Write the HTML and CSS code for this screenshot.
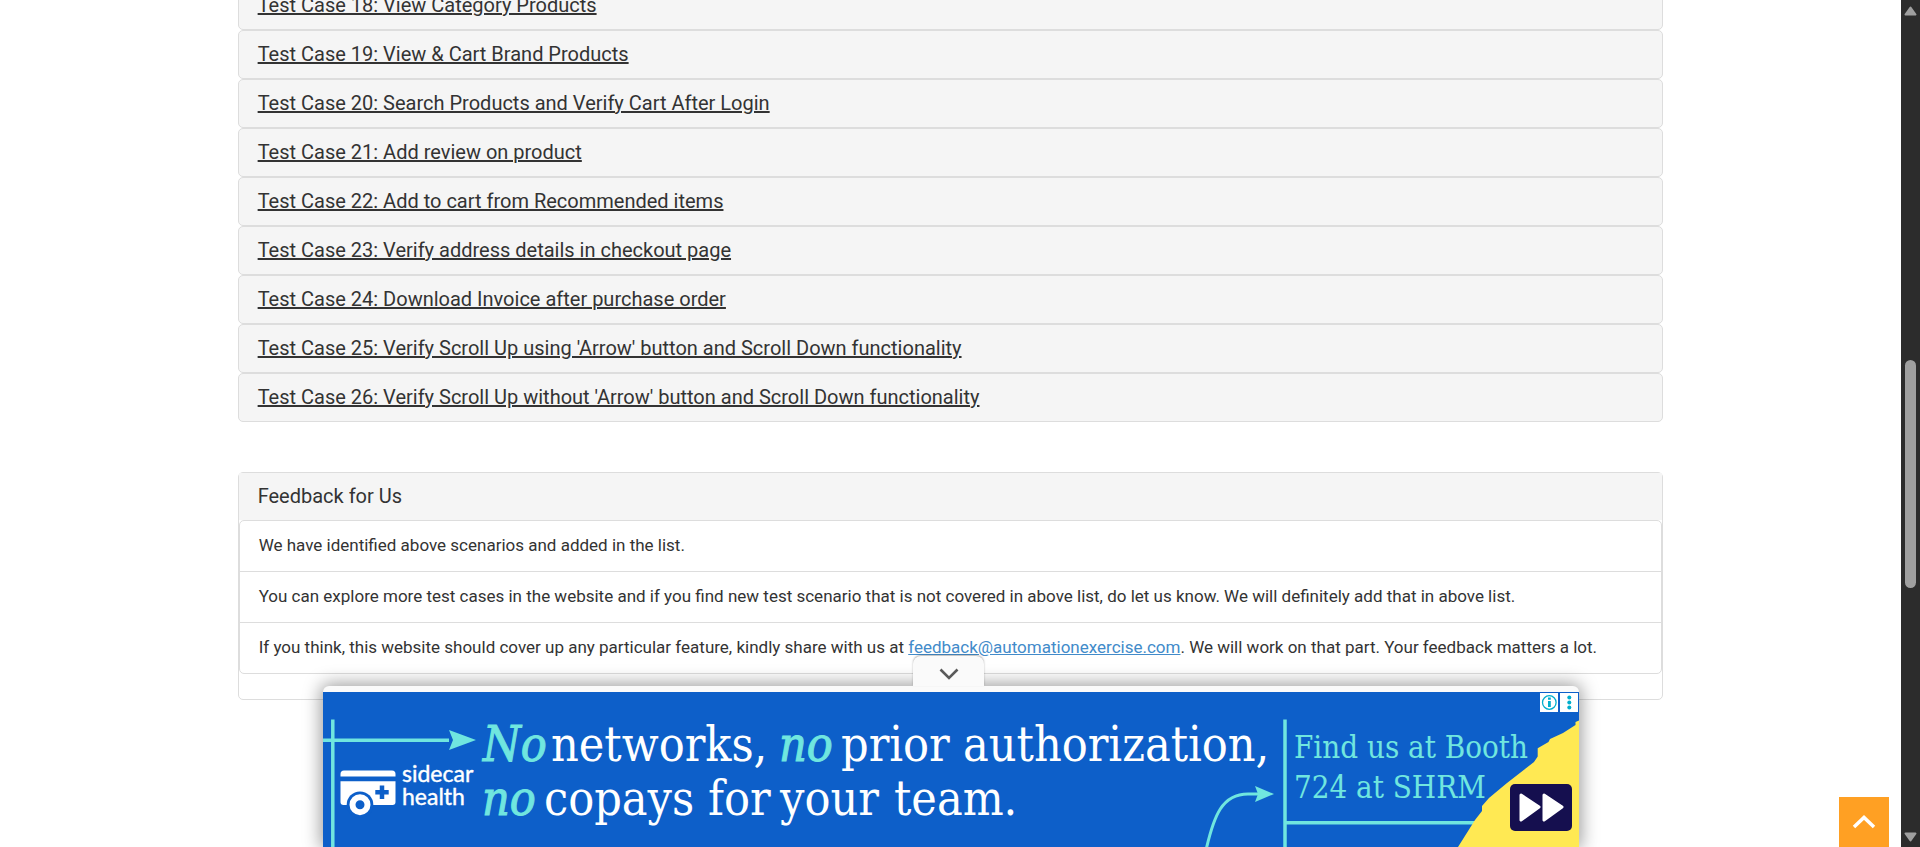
FILE: index.html
```html
<!DOCTYPE html>
<html lang="en">
<head>
<meta charset="utf-8">
<title>Test Cases</title>
<link rel="stylesheet" href="styles.css">
</head>
<body>
<div class="window">
  <main class="page">
    <section class="cases">
      <h4 class="case"><a href="#case18">Test Case 18: View Category Products</a></h4>
      <h4 class="case"><a href="#case19">Test Case 19: View &amp; Cart Brand Products</a></h4>
      <h4 class="case"><a href="#case20">Test Case 20: Search Products and Verify Cart After Login</a></h4>
      <h4 class="case"><a href="#case21">Test Case 21: Add review on product</a></h4>
      <h4 class="case"><a href="#case22">Test Case 22: Add to cart from Recommended items</a></h4>
      <h4 class="case"><a href="#case23">Test Case 23: Verify address details in checkout page</a></h4>
      <h4 class="case"><a href="#case24">Test Case 24: Download Invoice after purchase order</a></h4>
      <h4 class="case"><a href="#case25">Test Case 25: Verify Scroll Up using 'Arrow' button and Scroll Down functionality</a></h4>
      <h4 class="case"><a href="#case26">Test Case 26: Verify Scroll Up without 'Arrow' button and Scroll Down functionality</a></h4>
    </section>
    <section class="feedback">
      <h4 class="feedback-title">Feedback for Us</h4>
      <ul class="feedback-list">
        <li>We have identified above scenarios and added in the list.</li>
        <li>You can explore more test cases in the website and if you find new test scenario that is not covered in above list, do let us know. We will definitely add that in above list.</li>
        <li>If you think, this website should cover up any particular feature, kindly share with us at <a href="mailto:feedback@automationexercise.com">feedback@automationexercise.com</a>. We will work on that part. Your feedback matters a lot.</li>
      </ul>
    </section>

    <button class="scroll-up" type="button" aria-label="Scroll up">
      <svg width="24" height="14" viewBox="0 0 24 14"><path d="M2 12 12 2.500 22 12" fill="none" stroke="#fff" stroke-width="3.500"/></svg>
    </button>

    <aside class="ad">
      <button class="ad-toggle" type="button" aria-label="Collapse ad">
        <svg width="20" height="12" viewBox="0 0 20 12"><path d="M1.500 1.500 10 10 18.500 1.500" fill="none" stroke="#5a5a5a" stroke-width="2.600"/></svg>
      </button>
      <a class="ad-link" href="#ad">
        <svg class="ad-art" viewBox="0 0 1256 155">
          <rect width="1256" height="155" fill="#0d5fc9"/>
          <g stroke="#70e6df" fill="none" stroke-width="3.500">
            <path d="M9.800 27.500V155M0 48.300H126M962 27.500V155M962 130.700H1153"/>
            <path d="M883.500 156C891 124 899 102 925 102H935" stroke-width="3"/>
          </g>
          <path d="M126 38 153 48 126 58 130 48ZM932 94 951 102 932 110 935 102Z" fill="#70e6df"/>
          <path d="M1256 28.500 1252.500 30V33L1240 41 1227 47 1225.500 50 1214.700 56.300V64.500L1211 70 1183.700 91.300 1166 106 1159 114V119L1152 128 1135 155H1256Z" fill="#ffe953"/>
          <g class="ad-logo">
            <path d="M17.500 84.500V82a3.500 3.500 0 0 1 3.500-3.500H69a3.500 3.500 0 0 1 3.500 3.500V84.500Z" fill="#fff"/>
            <path d="M17.500 89.300H72.500V110a3 3 0 0 1-3 3H20.500a3 3 0 0 1-3-3Z" fill="#fff"/>
            <circle cx="37" cy="112.700" r="13.300" fill="#0d5fc9"/>
            <circle cx="37" cy="112.700" r="7.500" fill="none" stroke="#fff" stroke-width="6"/>
            <path d="M59 93.500V107M52.300 100.300H65.700" stroke="#0d5fc9" stroke-width="4.500"/>
          </g>
          <text class="ad-brand"><tspan x="79" y="90">sidecar</tspan><tspan x="79" y="113">health</tspan></text>
          <text class="ad-headline">
            <tspan class="accent" x="160" y="69">No</tspan><tspan x="228" y="69">networks,</tspan><tspan class="accent" x="456" y="69">no</tspan><tspan x="518" y="69">prior</tspan><tspan x="640" y="69">authorization,</tspan>
            <tspan class="accent" x="159" y="123">no</tspan><tspan x="221" y="123">copays</tspan><tspan x="385" y="123">for</tspan><tspan x="457" y="123">your</tspan><tspan x="571" y="123">team.</tspan>
          </text>
          <text class="ad-note"><tspan x="971" y="66">Find us at Booth</tspan><tspan x="971" y="106">724 at SHRM</tspan></text>
          <rect x="1187" y="92" width="62" height="47" rx="5" fill="#150f4f"/>
          <path d="M1198 103 1216 115 1198 128ZM1221 103 1239 115 1221 128Z" fill="#fff" stroke="#fff" stroke-width="3" stroke-linejoin="round"/>
          <path d="M1217 1h18v19h-18zM1237 1h18v19h-18z" fill="#fff"/>
          <circle cx="1226.300" cy="10.500" r="6.800" fill="none" stroke="#00aecd" stroke-width="1.300"/>
          <path d="M1225 9h2.800v6h-2.800zM1225 5.500h2.800v2.300h-2.800z" fill="#00aecd"/>
          <g fill="#00aecd"><circle cx="1246.300" cy="5.500" r="2"/><circle cx="1246.300" cy="10.500" r="2"/><circle cx="1246.300" cy="15.500" r="2"/></g>
        </svg>
      </a>
    </aside>
  </main>
  <div class="scrollbar" aria-hidden="true">
    <svg class="scroll-arrow" viewBox="0 0 13 10"><path d="M6.500 1.500 11.500 8.500H1.500Z" fill="#9f9f9f" stroke="#9f9f9f" stroke-width="2" stroke-linejoin="round"/></svg>
    <div class="track-before"></div>
    <div class="thumb"></div>
    <div class="track-after"></div>
    <svg class="scroll-arrow" viewBox="0 0 13 10"><path d="M6.500 8.500 11.500 1.500H1.500Z" fill="#9f9f9f" stroke="#9f9f9f" stroke-width="2" stroke-linejoin="round"/></svg>
  </div>
</div>
</body>
</html>
```
FILE: styles.css
```css
* { box-sizing: border-box; }

body {
  margin: 0;
  background: #fff;
  color: #333;
  font-family: Roboto, sans-serif;
  font-size: 17px;
  line-height: 25px;
}

.window {
  display: flex;
  height: 100vh;
  overflow: hidden;
}

.page {
  position: relative;
  flex: 1;
  min-width: 0;
  overflow: hidden;
}

.cases,
.feedback {
  width: 75%;
  margin: 0 auto;
}

.cases { margin-top: -19px; }

.case {
  margin: 0;
  padding: 12px 19px 13px;
  border: 1px solid #ddd;
  border-radius: 5px;
  background: #f5f5f5;
  font-size: 20px;
  font-weight: 400;
  line-height: 22px;
}

.case a { color: #333; }

.feedback {
  margin-top: 50px;
  padding-bottom: 25px;
  border: 1px solid #ddd;
  border-radius: 5px;
}

.feedback-title {
  margin: 0;
  padding: 12px 19px 13px;
  background: #f5f5f5;
  font-size: 20px;
  font-weight: 400;
  line-height: 22px;
}

.feedback-list {
  margin: 0;
  padding: 0;
  list-style: none;
  border: 1px solid #ddd;
  border-radius: 5px;
  background: #fff;
}

.feedback-list li { padding: 12px 19px 13px; }
.feedback-list li + li { border-top: 1px solid #ddd; }
.feedback-list a { color: #428bca; }

.scroll-up {
  position: absolute;
  right: 12px;
  bottom: 0;
  display: grid;
  place-items: center;
  width: 50px;
  height: 50px;
  padding: 0;
  border: 0;
  background: #ffa023;
}

.ad {
  position: absolute;
  bottom: 0;
  left: 17%;
  width: 1256px;
  max-width: 83%;
  padding-top: 6px;
  border-radius: 6px 6px 0 0;
  background: #fafafa;
  box-shadow: 0 0 18px 2px rgba(0, 0, 0, 0.4);
}

.ad-link,
.ad-art {
  display: block;
  width: 100%;
}

.ad-toggle {
  position: absolute;
  bottom: 100%;
  left: 47%;
  display: grid;
  place-items: center;
  width: 71px;
  height: 30px;
  padding: 6px 0 0;
  border: 0;
  border-radius: 8px 8px 0 0;
  background: #fafafa;
  box-shadow: 0 -1px 2px rgba(0, 0, 0, 0.3);
}

.ad-brand {
  fill: #fff;
  stroke: #fff;
  stroke-width: 0.4;
  font-family: Lato, sans-serif;
  font-size: 23px;
}

.ad-headline {
  fill: #fff;
  font-family: "DejaVu Serif Condensed", "DejaVu Serif", serif;
  font-size: 48px;
}

.ad-headline .accent {
  fill: #70e6df;
  stroke: #70e6df;
  stroke-width: 1;
  font-style: italic;
}

.ad-note {
  fill: #70e6df;
  font-family: "DejaVu Serif Condensed", "DejaVu Serif", serif;
  font-size: 31px;
}

.scrollbar {
  display: flex;
  flex-direction: column;
  align-items: center;
  width: 19px;
  padding: 6px 0 5px;
  background: #2c2c2c;
}

.scroll-arrow { width: 13px; height: 10px; }
.track-before { flex: 344; }
.thumb { flex: 228; width: 11px; border-radius: 6px; background: #9f9f9f; }
.track-after { flex: 244; }
```
